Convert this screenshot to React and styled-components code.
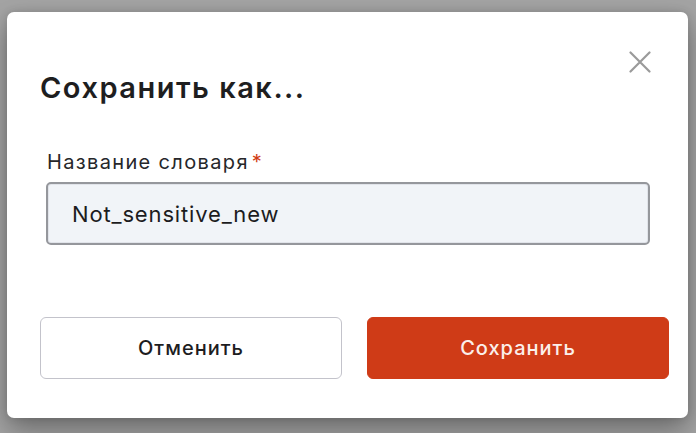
import React from "react";
import styled, { createGlobalStyle } from "styled-components";

const Global = createGlobalStyle`
  html, body { margin: 0; padding: 0; background: #a4a4a4; }
  body { font-family: Inter, "Noto Sans", sans-serif; }
  * { box-sizing: border-box; }
`;

const Overlay = styled.div`
  width: 696px;
  height: 433px;
  padding: 12px 8px 15px 7px;
  background: #a4a4a4;
  overflow: hidden;
`;

const Dialog = styled.div`
  position: relative;
  width: 681px;
  height: 406px;
  background: #ffffff;
  border-radius: 7px;
  box-shadow: 0 12px 28px rgba(0, 0, 0, 0.35), 0 0 8px rgba(0, 0, 0, 0.12);
  padding: 59px 19px 39px 33px;
  display: flex;
  flex-direction: column;
`;

const CloseButton = styled.button`
  position: absolute;
  top: 37px;
  right: 35px;
  width: 26px;
  height: 26px;
  padding: 0;
  border: none;
  background: none;
  display: flex;
  align-items: center;
  justify-content: center;
  cursor: pointer;
`;

const Title = styled.h2`
  margin: 0;
  font-size: 29px;
  line-height: 34px;
  font-weight: 600;
  color: #1e1e1f;
  letter-spacing: 1.5px;
`;

const Field = styled.div`
  margin: 45px 19px 0 6px;
  display: flex;
  flex-direction: column;
`;

const Label = styled.label`
  font-size: 20px;
  line-height: 24px;
  color: #26272a;
  letter-spacing: 1.35px;
  padding-left: 1px;
  display: flex;
`;

const Required = styled.span`
  color: #d13c16;
  margin-left: 3px;
  font-size: 20px;
`;

const Input = styled.div`
  margin-top: 8px;
  height: 63px;
  border: 2px solid #95979c;
  border-radius: 5px;
  background: #f1f4f8;
  box-shadow: inset 0 0 0 1px #e1e4ea;
  display: flex;
  align-items: center;
  padding: 0 24px;
  font-size: 22px;
  color: #1c1c1e;
  letter-spacing: 0.85px;
`;

const Actions = styled.div`
  margin-top: auto;
  display: grid;
  grid-template-columns: 302px 302px;
  gap: 25px;
`;

const Button = styled.button`
  height: 62px;
  border-radius: 6px;
  font-family: Inter, "Noto Sans", sans-serif;
  font-size: 20px;
  font-weight: 500;
  letter-spacing: 1px;
  cursor: pointer;
  border: 1px solid ${(p) => (p.$primary ? "#cf3b17" : "#c3c3cb")};
  background: ${(p) => (p.$primary ? "#cf3b17" : "#ffffff")};
  color: ${(p) => (p.$primary ? "#fbefeb" : "#1d1d1f")};
`;

export default function App() {
  return (
    <>
      <Global />
      <Overlay>
        <Dialog>
          <CloseButton aria-label="Закрыть">
            <svg width="22" height="22" viewBox="0 0 22 22">
              <path d="M1.5 1.5 L20.5 20.5 M20.5 1.5 L1.5 20.5" stroke="#9a9a9a" strokeWidth="2.2" strokeLinecap="round" />
            </svg>
          </CloseButton>
          <Title>Сохранить как...</Title>
          <Field>
            <Label>
              Название словаря<Required>*</Required>
            </Label>
            <Input>Not_sensitive_new</Input>
          </Field>
          <Actions>
            <Button>Отменить</Button>
            <Button $primary>Сохранить</Button>
          </Actions>
        </Dialog>
      </Overlay>
    </>
  );
}
